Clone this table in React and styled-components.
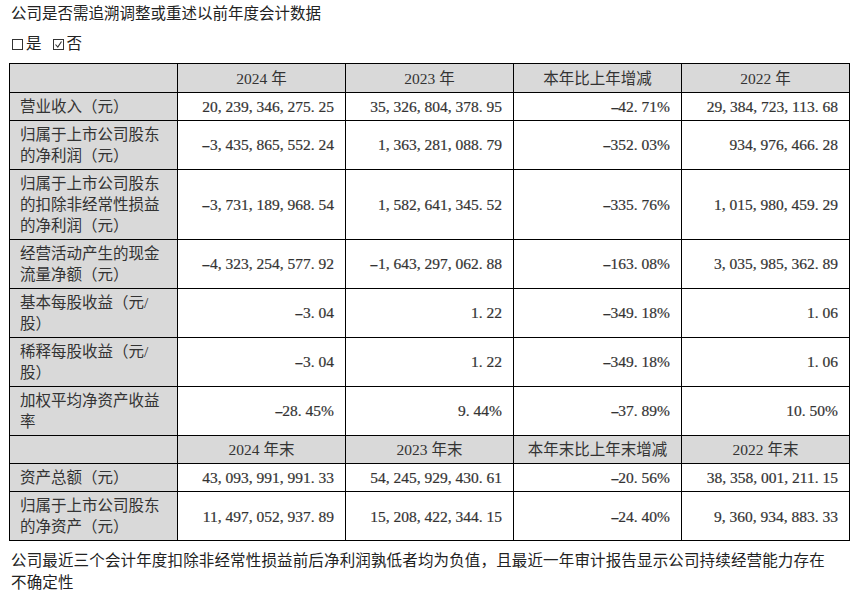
import React from "react";
import styled, { createGlobalStyle } from "styled-components";

const GlobalStyle = createGlobalStyle`
  body {
    margin: 0;
    background: #ffffff;
    font-family: "Liberation Serif", "Noto Sans CJK SC", serif;
    color: #222222;
  }
`;

const Page = styled.div`
  width: 861px;
  height: 595px;
  padding: 3px 0 0 9px;
  box-sizing: border-box;
  overflow: hidden;
`;

const Line = styled.div`
  padding-left: 2px;
  font-size: 15.5px;
  line-height: 22px;
  margin-top: ${(p) => p.gap || 0}px;
`;

const Choice = styled(Line)`
  display: flex;
  align-items: center;
  gap: 1px;
`;

const Box = styled.span`
  display: inline-block;
  width: 11px;
  height: 11px;
  border: 1px solid #333;
  box-sizing: border-box;
  margin: 0 2px 0 1px;
  position: relative;

  svg {
    position: absolute;
    left: 1px;
    top: 1px;
  }
`;

const Spacer = styled.span`
  width: 8px;
`;

const Footer = styled(Line)`
  width: 826px;
  letter-spacing: 0.15px;
  margin-top: 9px;
`;

const Table = styled.table`
  margin-top: 8px;
  width: 840px;
  table-layout: fixed;
  border-collapse: collapse;
  border: 1px solid #000;
  font-size: 15.5px;
  line-height: 21px;
  color: #333333;
`;

const Cell = styled.td`
  border: 1px solid #000;
  padding: 3px 11px 3px 10px;
  vertical-align: middle;
  text-align: right;
  white-space: nowrap;
  -webkit-text-stroke: 0.2px #333;
`;

const Label = styled.td`
  border: 1px solid #000;
  background: #d9d9d9;
  padding: 3px 14px 3px 10px;
  vertical-align: middle;
  text-align: left;
`;

const Head = styled.td`
  border: 1px solid #000;
  background: #d9d9d9;
  padding: 3.5px 8px 3px;
  text-align: center;
  white-space: nowrap;
`;

const Punct = styled.span`
  display: inline-block;
  width: 0.5em;
  text-align: left;
`;

const Dash = styled.span`
  display: inline-block;
  width: 0.5em;
  text-align: center;
  transform: scaleX(1.7);
`;

const Num = ({ v }) =>
  v.split("").map((c, i) =>
    c === "-" ? (
      <Dash key={i}>{c}</Dash>
    ) : /[,.]/.test(c) ? (
      <Punct key={i}>{c}</Punct>
    ) : (
      c
    )
  );

const yearHead = ["2024 年", "2023 年", "本年比上年增减", "2022 年"];
const endHead = ["2024 年末", "2023 年末", "本年末比上年末增减", "2022 年末"];

const rows = [
  ["营业收入（元）", "20,239,346,275.25", "35,326,804,378.95", "-42.71%", "29,384,723,113.68"],
  ["归属于上市公司股东的净利润（元）", "-3,435,865,552.24", "1,363,281,088.79", "-352.03%", "934,976,466.28"],
  ["归属于上市公司股东的扣除非经常性损益的净利润（元）", "-3,731,189,968.54", "1,582,641,345.52", "-335.76%", "1,015,980,459.29"],
  ["经营活动产生的现金流量净额（元）", "-4,323,254,577.92", "-1,643,297,062.88", "-163.08%", "3,035,985,362.89"],
  ["基本每股收益（元/股）", "-3.04", "1.22", "-349.18%", "1.06"],
  ["稀释每股收益（元/股）", "-3.04", "1.22", "-349.18%", "1.06"],
  ["加权平均净资产收益率", "-28.45%", "9.44%", "-37.89%", "10.50%"],
];

const endRows = [
  ["资产总额（元）", "43,093,991,991.33", "54,245,929,430.61", "-20.56%", "38,358,001,211.15"],
  ["归属于上市公司股东的净资产（元）", "11,497,052,937.89", "15,208,422,344.15", "-24.40%", "9,360,934,883.33"],
];

const HeadRow = ({ cols }) => (
  <tr>
    <Head />
    {cols.map((c) => (
      <Head key={c}>{c}</Head>
    ))}
  </tr>
);

const DataRow = ({ r }) => (
  <tr>
    <Label>{r[0]}</Label>
    {r.slice(1).map((v, i) => (
      <Cell key={i}>
        <Num v={v} />
      </Cell>
    ))}
  </tr>
);

export default function App() {
  return (
    <Page>
      <GlobalStyle />
      <Line>公司是否需追溯调整或重述以前年度会计数据</Line>
      <Choice gap={8}>
        <Box />
        是
        <Spacer />
        <Box>
          <svg width="7" height="7" viewBox="0 0 7 7">
            <path d="M0.5 3.5 L2.8 6 L6.5 0.5" fill="none" stroke="#333" strokeWidth="1.1" />
          </svg>
        </Box>
        否
      </Choice>
      <Table>
        <colgroup>
          {[0, 1, 2, 3, 4].map((i) => (
            <col key={i} style={{ width: 168 }} />
          ))}
        </colgroup>
        <tbody>
          <HeadRow cols={yearHead} />
          {rows.map((r) => (
            <DataRow key={r[0]} r={r} />
          ))}
          <HeadRow cols={endHead} />
          {endRows.map((r) => (
            <DataRow key={r[0]} r={r} />
          ))}
        </tbody>
      </Table>
      <Footer>
        公司最近三个会计年度扣除非经常性损益前后净利润孰低者均为负值，且最近一年审计报告显示公司持续经营能力存在不确定性
      </Footer>
    </Page>
  );
}
